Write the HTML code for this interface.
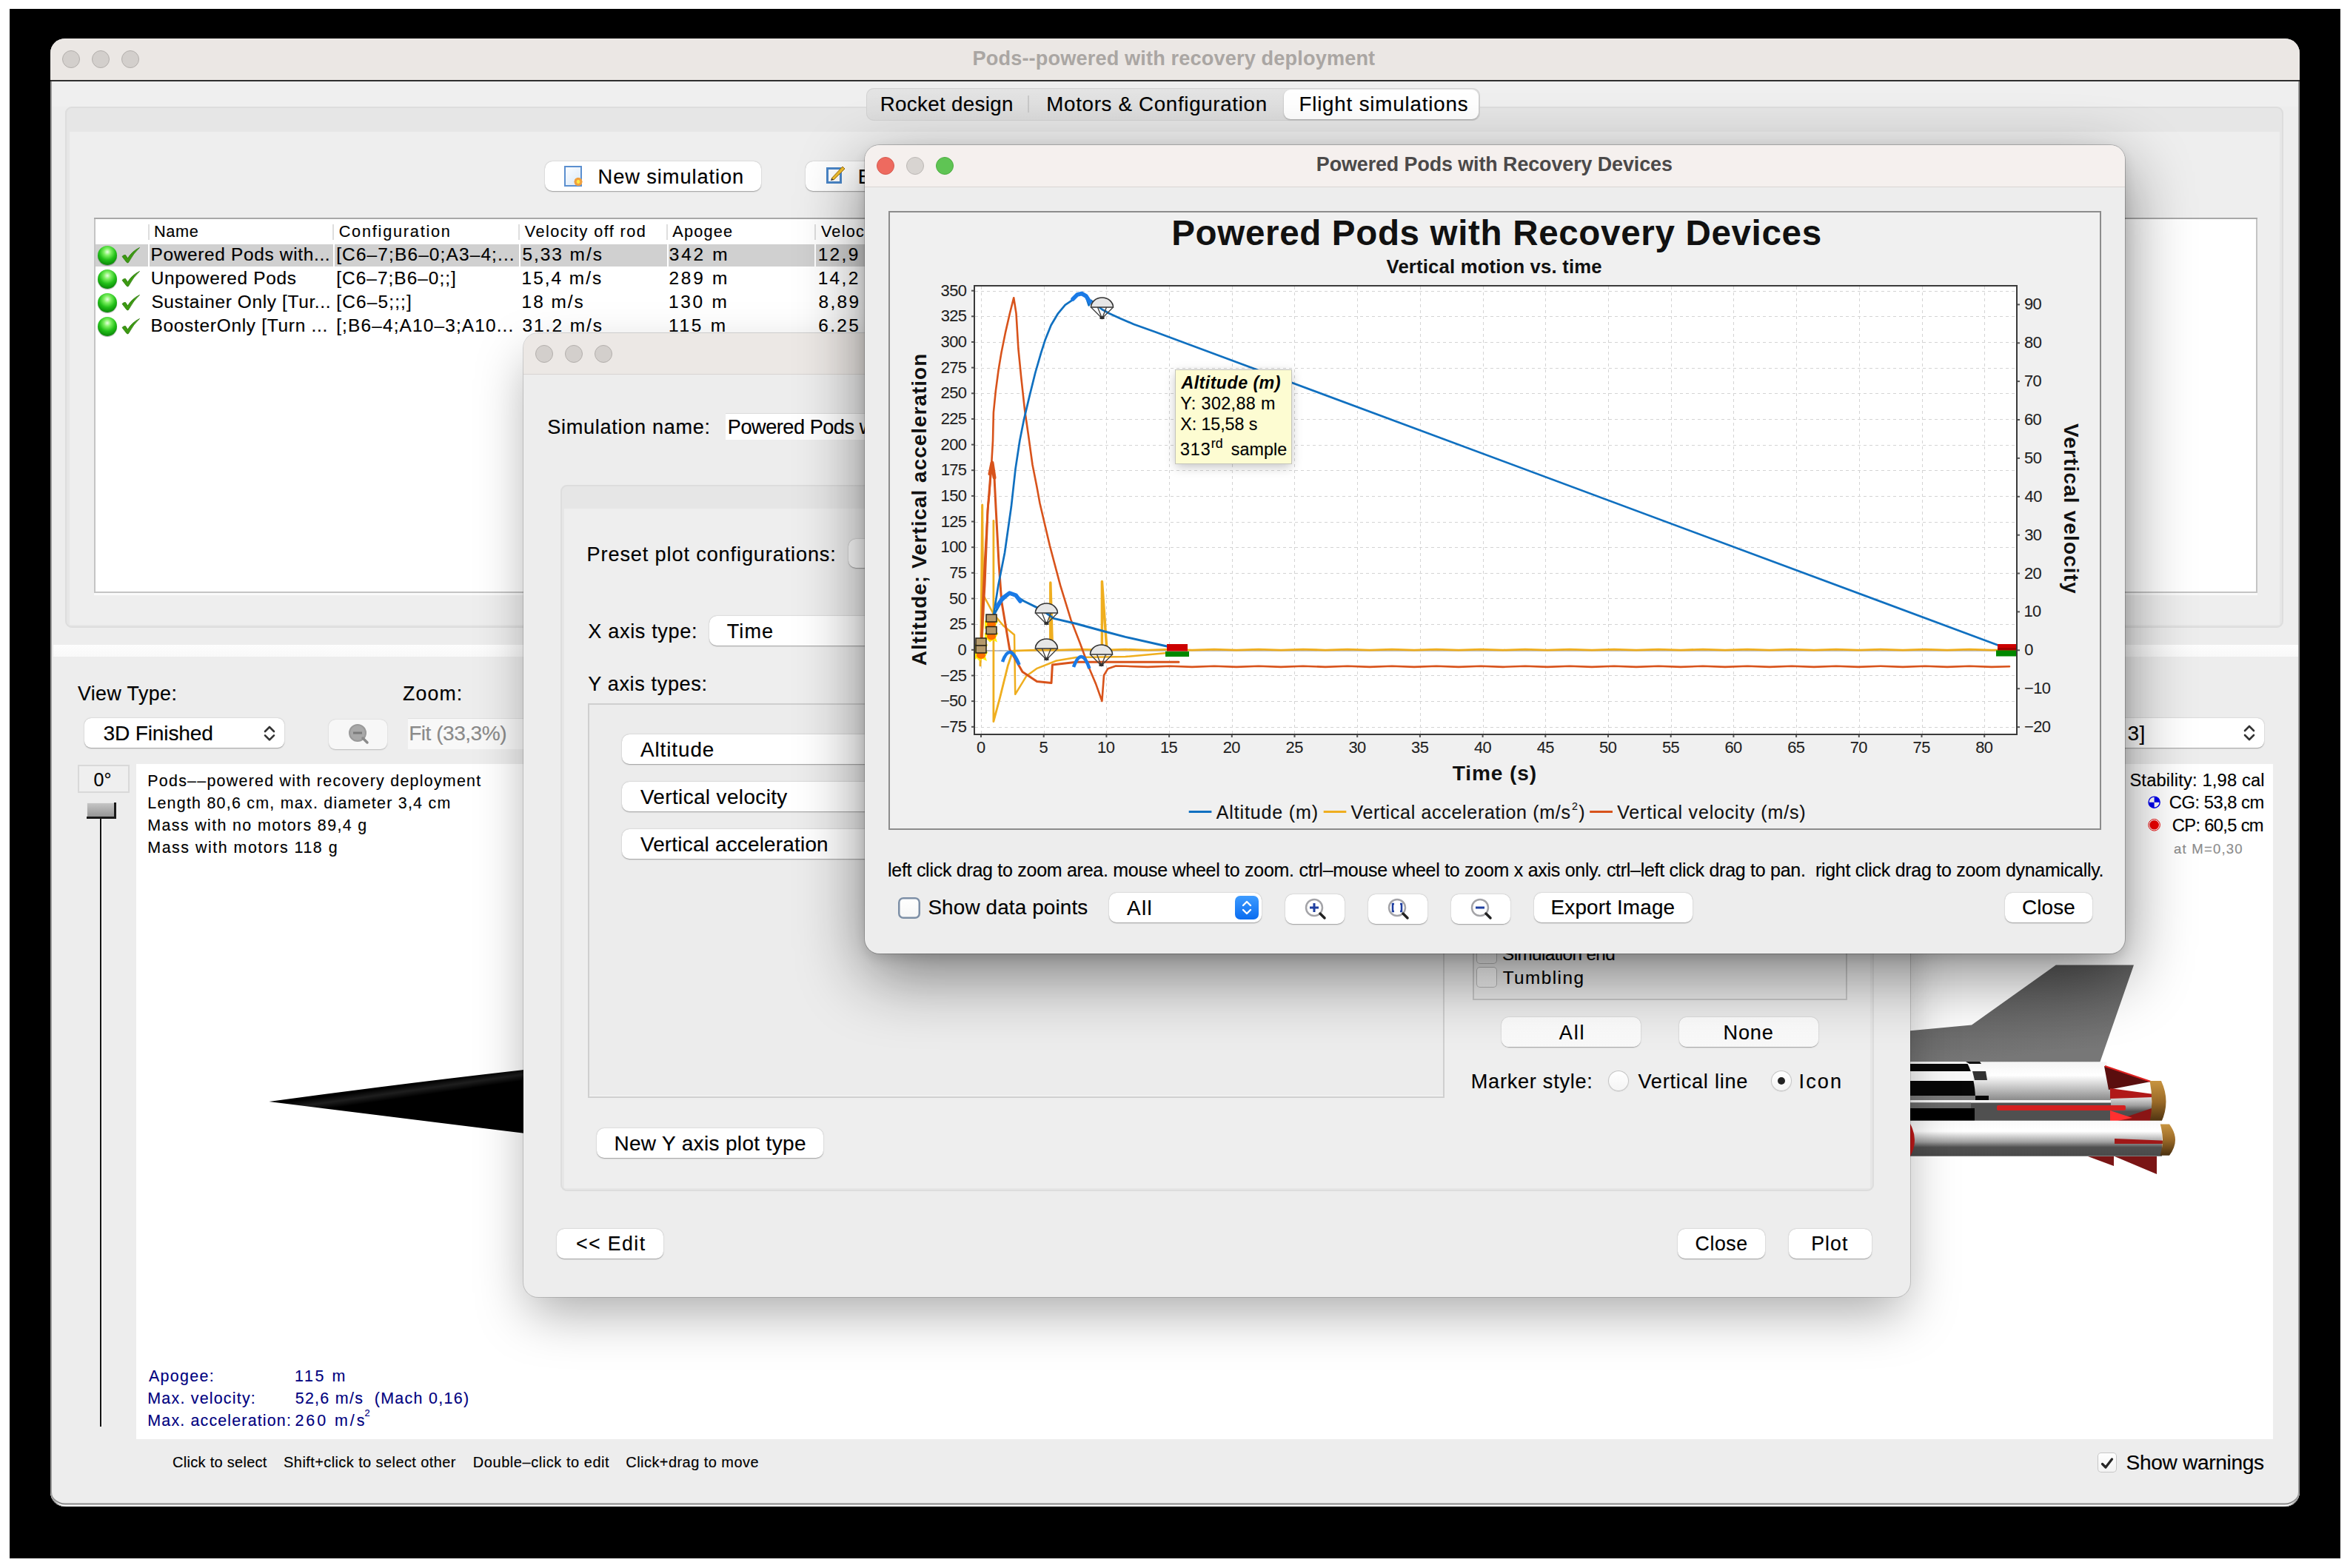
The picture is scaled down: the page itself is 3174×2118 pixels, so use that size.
<!DOCTYPE html>
<html><head><meta charset="utf-8"><style>
html,body{margin:0;padding:0;}
body{width:3174px;height:2118px;position:relative;overflow:hidden;background:#fff;font-family:"Liberation Sans",sans-serif;}
.a{position:absolute;}
.t{position:absolute;white-space:pre;-webkit-text-stroke:0.15px currentColor;}
svg.a{overflow:visible;}
</style></head><body>
<div class="a" style="left:13.0px;top:12.0px;width:3148.0px;height:2093.0px;background:#000;"></div>
<div class="a" style="left:68.0px;top:52.0px;width:3038.0px;height:1982.5px;background:#ededed;border-radius:20px;box-shadow:inset 2px 0 0 #999, inset -2px 0 0 #999, inset 0 -2.5px 0 #fafafa, inset 0 -4.5px 0 #8a8a8a;"></div>
<div class="a" style="left:68.0px;top:52.0px;width:3038.0px;height:56.0px;background:#ebe7e4;border-radius:20px 20px 0 0;"></div>
<div class="a" style="left:68.0px;top:108.0px;width:3038.0px;height:2.0px;background:#2e2e2e;"></div>
<div class="a" style="left:70.0px;top:110.0px;width:3034.0px;height:34.0px;background:#efefef;"></div>
<div class="a" style="left:84px;top:68px;width:22px;height:22px;border-radius:50%;background:#d3cfcc;border:1px solid #b3afac;"></div>
<div class="a" style="left:124px;top:68px;width:22px;height:22px;border-radius:50%;background:#d3cfcc;border:1px solid #b3afac;"></div>
<div class="a" style="left:164px;top:68px;width:22px;height:22px;border-radius:50%;background:#d3cfcc;border:1px solid #b3afac;"></div>
<div class="t" style="left:1313.5px;top:65.3px;font-size:27.14px;line-height:27.14px;color:#aaa6a3;letter-spacing:0.15px;font-weight:bold;-webkit-text-stroke:0;">Pods--powered with recovery deployment</div>
<div class="a" style="left:88.0px;top:144.0px;width:2996.0px;height:704.0px;background:#e6e6e6;border-radius:9px;box-shadow:inset 0 0 0 2px #dddddd;"></div>
<div class="a" style="left:93.7px;top:178.0px;width:2985.3px;height:666.0px;background:#eeeeee;"></div>
<div class="a" style="left:1170.0px;top:119.0px;width:829.0px;height:44.0px;background:linear-gradient(#e4e4e4,#dcdcdc);border-radius:10px;box-shadow:inset 0 0 0 1px #d2d2d2;"></div>
<div class="a" style="left:1734.0px;top:121.0px;width:263.0px;height:40.0px;background:#fff;border-radius:9px;box-shadow:0 1px 2px rgba(0,0,0,0.25);"></div>
<div class="a" style="left:1388.0px;top:129.0px;width:2.0px;height:23.0px;background:#c9c9c9;"></div>
<div class="t" style="left:1188.7px;top:126.5px;font-size:27.71px;line-height:27.71px;color:#000;letter-spacing:0.34px;">Rocket design</div>
<div class="t" style="left:1413.3px;top:126.5px;font-size:27.71px;line-height:27.71px;color:#000;letter-spacing:0.69px;">Motors &amp; Configuration</div>
<div class="t" style="left:1754.4px;top:126.5px;font-size:27.71px;line-height:27.71px;color:#000;letter-spacing:0.83px;">Flight simulations</div>
<div class="a" style="left:736.0px;top:218.0px;width:292.0px;height:40.0px;background:#fff;border-radius:10px;box-shadow:0 0.5px 1.5px rgba(0,0,0,0.35);"></div>
<div class="a" style="left:762.0px;top:224.0px;width:24.0px;height:27.5px;background:linear-gradient(135deg,#ffffff,#d6e6f8);box-shadow:inset 0 0 0 2px #5b8fcf;"></div>
<div class="a" style="left:775.0px;top:239.0px;width:12.0px;height:13.0px;background:radial-gradient(circle,#ffe640 0 25%,#f0a040 30% 60%,transparent 65%);"></div>
<div class="t" style="left:807.6px;top:224.9px;font-size:27.29px;line-height:27.29px;color:#000;letter-spacing:0.89px;">New simulation</div>
<div class="a" style="left:1088.0px;top:218.0px;width:292.0px;height:40.0px;background:#fff;border-radius:10px;box-shadow:0 0.5px 1.5px rgba(0,0,0,0.35);"></div>
<div class="a" style="left:1116.0px;top:226.0px;width:21.0px;height:22.0px;background:transparent;box-shadow:inset 0 0 0 3px #4a86c8;"></div>
<svg class="a" style="left:1120px;top:222px" width="22" height="22" viewBox="0 0 22 22"><path d="M3 19 L18 3 L21 6 L6 21 Z" fill="#f2c030" stroke="#a07010" stroke-width="1"/><path d="M3 19 L6 21 L2 22Z" fill="#333"/></svg>
<div class="t" style="left:1158.8px;top:224.9px;font-size:27.29px;line-height:27.29px;color:#000;">Edit simulation</div>
<div class="a" style="left:127.0px;top:294.0px;width:2922.0px;height:507.0px;background:#fff;box-shadow:inset 0 2px 0 #a8a8a8, inset 2px 0 0 #c4c4c4, inset -2px 0 0 #c4c4c4, inset 0 -2px 0 #c4c4c4;"></div>
<div class="a" style="left:127.0px;top:801.0px;width:2922.0px;height:3.0px;background:#fafafa;"></div>
<div class="a" style="left:199.9px;top:302.5px;width:2.0px;height:21.2px;background:#dedede;"></div>
<div class="a" style="left:449.2px;top:302.5px;width:2.0px;height:21.2px;background:#dedede;"></div>
<div class="a" style="left:700.0px;top:302.5px;width:2.0px;height:21.2px;background:#dedede;"></div>
<div class="a" style="left:900.0px;top:302.5px;width:2.0px;height:21.2px;background:#dedede;"></div>
<div class="a" style="left:1099.8px;top:302.5px;width:2.0px;height:21.2px;background:#dedede;"></div>
<div class="t" style="left:208.0px;top:301.7px;font-size:21.71px;line-height:21.71px;color:#000;letter-spacing:0.65px;">Name</div>
<div class="t" style="left:457.7px;top:301.7px;font-size:21.71px;line-height:21.71px;color:#000;letter-spacing:1.76px;">Configuration</div>
<div class="t" style="left:708.8px;top:301.7px;font-size:21.71px;line-height:21.71px;color:#000;letter-spacing:1.40px;">Velocity off rod</div>
<div class="t" style="left:908.3px;top:301.7px;font-size:21.71px;line-height:21.71px;color:#000;letter-spacing:1.20px;">Apogee</div>
<div class="t" style="left:1108.9px;top:301.7px;font-size:21.71px;line-height:21.71px;color:#000;letter-spacing:1.20px;">Velocity at deployment</div>
<div class="a" style="left:129.0px;top:330.0px;width:70.8px;height:30.0px;background:#d0d0d0;"></div>
<div class="a" style="left:201.9px;top:330.0px;width:248.1px;height:30.0px;background:#d0d0d0;"></div>
<div class="a" style="left:452.0px;top:330.0px;width:249.0px;height:30.0px;background:#d0d0d0;"></div>
<div class="a" style="left:703.0px;top:330.0px;width:198.0px;height:30.0px;background:#d0d0d0;"></div>
<div class="a" style="left:903.0px;top:330.0px;width:197.0px;height:30.0px;background:#d0d0d0;"></div>
<div class="a" style="left:1102.0px;top:330.0px;width:1298.0px;height:30.0px;background:#d0d0d0;"></div>
<div class="a" style="left:132.3px;top:331.5px;width:26px;height:26px;border-radius:50%;background:radial-gradient(circle at 50% 32%, #e8ffe0 0%, #7cf060 22%, #22c018 50%, #0c8a0a 78%, #064a04 100%);box-shadow:0 1px 1px rgba(0,0,0,0.35);"></div>
<svg class="a" style="left:164px;top:334px" width="26" height="22" viewBox="0 0 26 22"><path d="M1 12.5 Q3 10 5.5 10.5 L8.5 15 Q14 5.5 24.5 0.5 Q16.5 7.5 9.5 20.5 Q8.3 21.5 7 20.3 Z" fill="#3c9a12" stroke="#2c7a0a" stroke-width="0.8"/></svg>
<div class="t" style="left:203.5px;top:332.3px;font-size:24.43px;line-height:24.43px;color:#000;letter-spacing:0.67px;">Powered Pods with...</div>
<div class="t" style="left:454.2px;top:332.3px;font-size:24.43px;line-height:24.43px;color:#000;letter-spacing:1.14px;">[C6–7;B6–0;A3–4;...</div>
<div class="t" style="left:705.4px;top:332.3px;font-size:24.43px;line-height:24.43px;color:#000;letter-spacing:1.98px;">5,33 m/s</div>
<div class="t" style="left:903.8px;top:332.3px;font-size:24.43px;line-height:24.43px;color:#000;letter-spacing:2.76px;">342 m</div>
<div class="t" style="left:1104.7px;top:332.3px;font-size:24.43px;line-height:24.43px;color:#000;letter-spacing:2.34px;">12,9 m/s</div>
<div class="a" style="left:132.3px;top:363.5px;width:26px;height:26px;border-radius:50%;background:radial-gradient(circle at 50% 32%, #e8ffe0 0%, #7cf060 22%, #22c018 50%, #0c8a0a 78%, #064a04 100%);box-shadow:0 1px 1px rgba(0,0,0,0.35);"></div>
<svg class="a" style="left:164px;top:366px" width="26" height="22" viewBox="0 0 26 22"><path d="M1 12.5 Q3 10 5.5 10.5 L8.5 15 Q14 5.5 24.5 0.5 Q16.5 7.5 9.5 20.5 Q8.3 21.5 7 20.3 Z" fill="#3c9a12" stroke="#2c7a0a" stroke-width="0.8"/></svg>
<div class="t" style="left:203.7px;top:364.3px;font-size:24.43px;line-height:24.43px;color:#000;letter-spacing:0.69px;">Unpowered Pods</div>
<div class="t" style="left:454.2px;top:364.3px;font-size:24.43px;line-height:24.43px;color:#000;letter-spacing:1.03px;">[C6–7;B6–0;;]</div>
<div class="t" style="left:704.6px;top:364.3px;font-size:24.43px;line-height:24.43px;color:#000;letter-spacing:1.98px;">15,4 m/s</div>
<div class="t" style="left:903.5px;top:364.3px;font-size:24.43px;line-height:24.43px;color:#000;letter-spacing:2.76px;">289 m</div>
<div class="t" style="left:1104.7px;top:364.3px;font-size:24.43px;line-height:24.43px;color:#000;letter-spacing:2.34px;">14,2 m/s</div>
<div class="a" style="left:132.3px;top:395.5px;width:26px;height:26px;border-radius:50%;background:radial-gradient(circle at 50% 32%, #e8ffe0 0%, #7cf060 22%, #22c018 50%, #0c8a0a 78%, #064a04 100%);box-shadow:0 1px 1px rgba(0,0,0,0.35);"></div>
<svg class="a" style="left:164px;top:398px" width="26" height="22" viewBox="0 0 26 22"><path d="M1 12.5 Q3 10 5.5 10.5 L8.5 15 Q14 5.5 24.5 0.5 Q16.5 7.5 9.5 20.5 Q8.3 21.5 7 20.3 Z" fill="#3c9a12" stroke="#2c7a0a" stroke-width="0.8"/></svg>
<div class="t" style="left:204.4px;top:396.3px;font-size:24.43px;line-height:24.43px;color:#000;letter-spacing:0.65px;">Sustainer Only [Tur...</div>
<div class="t" style="left:454.2px;top:396.3px;font-size:24.43px;line-height:24.43px;color:#000;letter-spacing:1.17px;">[C6–5;;;]</div>
<div class="t" style="left:704.6px;top:396.3px;font-size:24.43px;line-height:24.43px;color:#000;letter-spacing:1.98px;">18 m/s</div>
<div class="t" style="left:902.9px;top:396.3px;font-size:24.43px;line-height:24.43px;color:#000;letter-spacing:2.76px;">130 m</div>
<div class="t" style="left:1105.5px;top:396.3px;font-size:24.43px;line-height:24.43px;color:#000;letter-spacing:2.34px;">8,89 m/s</div>
<div class="a" style="left:132.3px;top:427.5px;width:26px;height:26px;border-radius:50%;background:radial-gradient(circle at 50% 32%, #e8ffe0 0%, #7cf060 22%, #22c018 50%, #0c8a0a 78%, #064a04 100%);box-shadow:0 1px 1px rgba(0,0,0,0.35);"></div>
<svg class="a" style="left:164px;top:430px" width="26" height="22" viewBox="0 0 26 22"><path d="M1 12.5 Q3 10 5.5 10.5 L8.5 15 Q14 5.5 24.5 0.5 Q16.5 7.5 9.5 20.5 Q8.3 21.5 7 20.3 Z" fill="#3c9a12" stroke="#2c7a0a" stroke-width="0.8"/></svg>
<div class="t" style="left:203.5px;top:428.3px;font-size:24.43px;line-height:24.43px;color:#000;letter-spacing:0.72px;">BoosterOnly [Turn ...</div>
<div class="t" style="left:454.2px;top:428.3px;font-size:24.43px;line-height:24.43px;color:#000;letter-spacing:1.14px;">[;B6–4;A10–3;A10...</div>
<div class="t" style="left:705.5px;top:428.3px;font-size:24.43px;line-height:24.43px;color:#000;letter-spacing:1.98px;">31.2 m/s</div>
<div class="t" style="left:902.9px;top:428.3px;font-size:24.43px;line-height:24.43px;color:#000;letter-spacing:2.76px;">115 m</div>
<div class="t" style="left:1105.3px;top:428.3px;font-size:24.43px;line-height:24.43px;color:#000;letter-spacing:2.34px;">6.25 m/s</div>
<div class="a" style="left:72.0px;top:871.0px;width:3032.0px;height:16.0px;background:linear-gradient(#fdfdfd,#f9f9f9);"></div>
<div class="t" style="left:104.9px;top:923.7px;font-size:26.71px;line-height:26.71px;color:#000;letter-spacing:0.48px;">View Type:</div>
<div class="t" style="left:544.1px;top:923.7px;font-size:26.71px;line-height:26.71px;color:#000;letter-spacing:1.12px;">Zoom:</div>
<div class="a" style="left:113.7px;top:970.2px;width:270.0px;height:39.8px;background:#fff;border-radius:9px;box-shadow:0 0.5px 1.5px rgba(0,0,0,0.35);"></div>
<div class="t" style="left:139.4px;top:976.5px;font-size:28.14px;line-height:28.14px;color:#000;letter-spacing:-0.15px;">3D Finished</div>
<svg class="a" style="left:356px;top:979.6px" width="16" height="21.3" viewBox="0 0 16 21.3"><path d="M2 8 L8 2 L14 8" fill="none" stroke="#333" stroke-width="2.6" stroke-linecap="round" stroke-linejoin="round"/><path d="M2 13.3 L8 19.3 L14 13.3" fill="none" stroke="#333" stroke-width="2.6" stroke-linecap="round" stroke-linejoin="round"/></svg>
<div class="a" style="left:444.2px;top:971.8px;width:79.1px;height:40.0px;background:#f7f7f7;border-radius:9px;box-shadow:0 0.5px 1.5px rgba(0,0,0,0.22);"></div>
<svg class="a" style="left:469px;top:975px" width="34" height="34" viewBox="0 0 34 34"><circle cx="14" cy="15" r="11" fill="#a8a8a8" stroke="#9a9a9a" stroke-width="2"/><rect x="8" y="13.5" width="12" height="3" fill="#7a7a7a"/><path d="M21 22 L27 28" stroke="#8a8a8a" stroke-width="3.5" stroke-linecap="round"/></svg>
<div class="a" style="left:550.6px;top:970.0px;width:169.4px;height:42.0px;background:#f8f8f8;box-shadow:inset 0 1px 0 #e0e0e0;"></div>
<div class="t" style="left:552.2px;top:976.5px;font-size:28.14px;line-height:28.14px;color:#8a8a8a;letter-spacing:-0.52px;">Fit (33,3%)</div>
<div class="a" style="left:2700.0px;top:969.7px;width:357.6px;height:40.1px;background:#fff;border-radius:9px;box-shadow:0 0.5px 1.5px rgba(0,0,0,0.35);"></div>
<div class="t" style="left:2873.5px;top:977.2px;font-size:28.14px;line-height:28.14px;color:#000;letter-spacing:0.46px;">3]</div>
<svg class="a" style="left:3030px;top:979px" width="16" height="22" viewBox="0 0 16 22"><path d="M2 8 L8 2 L14 8" fill="none" stroke="#333" stroke-width="2.6" stroke-linecap="round" stroke-linejoin="round"/><path d="M2 14 L8 20 L14 14" fill="none" stroke="#333" stroke-width="2.6" stroke-linecap="round" stroke-linejoin="round"/></svg>
<div class="a" style="left:104.9px;top:1032.5px;width:70.6px;height:38.5px;background:#efefef;box-shadow:inset 0 0 0 2px #d9d9d9;"></div>
<div class="t" style="left:126.6px;top:1040.7px;font-size:25.00px;line-height:25.00px;color:#000;">0°</div>
<div class="a" style="left:134.5px;top:1105.0px;width:2.0px;height:822.0px;background:#111;"></div>
<div class="a" style="left:136.5px;top:1105.0px;width:1.5px;height:822.0px;background:#fff;"></div>
<div class="a" style="left:117.0px;top:1084.0px;width:40.0px;height:22.0px;background:linear-gradient(#c8c8c8,#8e8e8e);box-shadow:inset -3px -3px 0 #1a1a1a, inset 1px 1px 0 #e8e8e8;"></div>
<div class="a" style="left:184.0px;top:1032.0px;width:2886.0px;height:912.0px;background:#fff;"></div>
<svg class="a" style="left:0px;top:0px" width="3174" height="2118" viewBox="0 0 3174 2118"><defs><linearGradient id="nc" gradientUnits="userSpaceOnUse" x1="600" y1="1458" x2="606" y2="1500"><stop offset="0" stop-color="#000"/><stop offset="0.2" stop-color="#1e1e1e"/><stop offset="0.4" stop-color="#000"/><stop offset="1" stop-color="#000"/></linearGradient></defs><path d="M363.4 1487.9 Q 540 1464 708 1445 L 708 1530.8 Q 540 1510 363.4 1487.9 Z" fill="url(#nc)"/></svg>
<svg class="a" style="left:0;top:0" width="3174" height="2118" viewBox="0 0 3174 2118"><defs><linearGradient id="fin" x1="0" y1="0" x2="0.3" y2="1"><stop offset="0" stop-color="#545454"/><stop offset="1" stop-color="#777"/></linearGradient><linearGradient id="tubeW" x1="0" y1="0" x2="0" y2="1"><stop offset="0" stop-color="#f4f4f4"/><stop offset="0.35" stop-color="#ffffff"/><stop offset="0.75" stop-color="#b8b8b8"/><stop offset="1" stop-color="#8a8a8a"/></linearGradient><linearGradient id="tubeB" x1="0" y1="0" x2="0" y2="1"><stop offset="0" stop-color="#000"/><stop offset="0.2" stop-color="#111"/><stop offset="0.35" stop-color="#e8e8e8"/><stop offset="0.5" stop-color="#555"/><stop offset="0.7" stop-color="#000"/><stop offset="1" stop-color="#000"/></linearGradient><linearGradient id="pod" x1="0" y1="0" x2="0" y2="1"><stop offset="0" stop-color="#f8f8f8"/><stop offset="0.3" stop-color="#ffffff"/><stop offset="0.6" stop-color="#a0a0a0"/><stop offset="0.75" stop-color="#505050"/><stop offset="1" stop-color="#4a4a4a"/></linearGradient><linearGradient id="ring" x1="0" y1="0" x2="0" y2="1"><stop offset="0" stop-color="#c89440"/><stop offset="0.5" stop-color="#9a6a28"/><stop offset="1" stop-color="#4a3010"/></linearGradient></defs><path d="M2580 1392.3 L2663 1384.5 L2776.8 1303.4 L2882 1303.4 L2836.4 1434.4 L2580 1434.4 Z" fill="url(#fin)"/><path d="M2580 1434.4 L2845 1434.4 Q2853 1460 2851.6 1486 L2580 1486 Z" fill="url(#tubeW)"/><clipPath id="blk"><path d="M2580 1434 L2656 1434 Q2668 1456 2668 1486 L2580 1486 Z"/></clipPath><g clip-path="url(#blk)"><rect x="2580" y="1434" width="90" height="3" fill="#f2f2f2"/><rect x="2580" y="1437" width="90" height="10" fill="#080808"/><rect x="2580" y="1447" width="90" height="13" fill="#f8f8f8"/><rect x="2580" y="1460" width="90" height="20" fill="#070707"/><rect x="2580" y="1480" width="90" height="6" fill="#7a7a7a"/></g><path d="M2655 1434 L2674 1434 L2676 1437 L2660 1437 Z" fill="#111"/><path d="M2664 1447 L2682 1447 L2684 1459 L2667 1459 Z" fill="#333"/><path d="M2668 1480 L2686 1480 L2686 1486 L2668 1486 Z" fill="#050505"/><rect x="2580" y="1486" width="272" height="3.5" fill="#f4f4f4"/><path d="M2580 1489.5 L2852 1489.5 L2852 1514 L2580 1514 Z" fill="#505050"/><rect x="2580" y="1489.5" width="82" height="7.5" fill="#6a6a6a"/><path d="M2580 1497 L2667 1497 L2667 1514 L2580 1514 Z" fill="#000"/><rect x="2851" y="1460" width="55" height="55" fill="url(#pod)"/><path d="M2842 1440 L2905 1461 L2848 1472 Z" fill="#5a0e0e"/><path d="M2843 1440 L2905 1461" stroke="#e02020" stroke-width="2"/><path d="M2850 1470 L2909 1478 L2909 1482 L2850 1484 Z" fill="#b01818"/><rect x="2697" y="1493" width="174" height="7" rx="2" fill="#d42020"/><path d="M2850 1516 L2915 1494 L2915 1518 Z" fill="#8a1515"/><path d="M2850 1500 L2880 1510 L2850 1516 Z" fill="#ff3030"/><path d="M2903.6 1460 L2919 1460 Q2932 1488 2919 1516 L2903.6 1516 Q2909 1488 2903.6 1460 Z" fill="url(#ring)"/><rect x="2580" y="1513.7" width="340" height="48" fill="url(#pod)"/><path d="M2580 1518 Q2592 1540 2580 1562 Z" fill="#c01818"/><path d="M2856 1538 L2930 1541 L2930 1545 L2856 1545 Z" fill="#a01818"/><path d="M2820 1562 L2855 1575 L2855 1562 Z" fill="#7a1515"/><path d="M2856 1562 L2913 1586 L2913 1562 Z" fill="#7a1515"/><path d="M2917.7 1518.5 L2930 1518.5 Q2946 1540 2930 1560.8 L2917.7 1560.8 Q2924 1540 2917.7 1518.5 Z" fill="url(#ring)"/></svg>
<div class="t" style="left:199.3px;top:1044.9px;font-size:21.43px;line-height:21.43px;color:#000;letter-spacing:1.25px;">Pods––powered with recovery deployment</div>
<div class="t" style="left:199.3px;top:1074.9px;font-size:21.43px;line-height:21.43px;color:#000;letter-spacing:1.24px;">Length 80,6 cm, max. diameter 3,4 cm</div>
<div class="t" style="left:199.3px;top:1104.9px;font-size:21.43px;line-height:21.43px;color:#000;letter-spacing:1.36px;">Mass with no motors 89,4 g</div>
<div class="t" style="left:199.3px;top:1134.9px;font-size:21.43px;line-height:21.43px;color:#000;letter-spacing:1.51px;">Mass with motors 118 g</div>
<div class="t" style="left:201.0px;top:1848.5px;font-size:21.43px;line-height:21.43px;color:#000080;letter-spacing:1.33px;">Apogee:</div>
<div class="t" style="left:398.0px;top:1848.5px;font-size:21.43px;line-height:21.43px;color:#000080;letter-spacing:2.61px;">115 m</div>
<div class="t" style="left:199.3px;top:1878.5px;font-size:21.43px;line-height:21.43px;color:#000080;letter-spacing:1.21px;">Max. velocity:</div>
<div class="t" style="left:398.7px;top:1878.5px;font-size:21.43px;line-height:21.43px;color:#000080;letter-spacing:1.30px;">52,6 m/s  (Mach 0,16)</div>
<div class="t" style="left:199.3px;top:1908.9px;font-size:21.43px;line-height:21.43px;color:#000080;letter-spacing:1.16px;">Max. acceleration:</div>
<div class="t" style="left:398.5px;top:1908.9px;font-size:21.43px;line-height:21.43px;color:#000080;letter-spacing:2.94px;">260 m/s</div>
<div class="t" style="left:492.4px;top:1903.1px;font-size:12.86px;line-height:12.86px;color:#000080;">2</div>
<div class="t" style="left:233.0px;top:1965.3px;font-size:20.00px;line-height:20.00px;color:#000;letter-spacing:0.29px;">Click to select</div>
<div class="t" style="left:383.1px;top:1965.3px;font-size:20.00px;line-height:20.00px;color:#000;letter-spacing:0.41px;">Shift+click to select other</div>
<div class="t" style="left:638.8px;top:1965.3px;font-size:20.00px;line-height:20.00px;color:#000;letter-spacing:0.55px;">Double–click to edit</div>
<div class="t" style="left:845.3px;top:1965.3px;font-size:20.00px;line-height:20.00px;color:#000;letter-spacing:0.44px;">Click+drag to move</div>
<div class="a" style="left:2832.5px;top:1962.4px;width:26.8px;height:26.7px;background:linear-gradient(#ffffff,#f2f2f2);border-radius:5px;box-shadow:inset 0 0 0 1px #c6c6c6;"></div>
<svg class="a" style="left:2836px;top:1966px" width="20" height="20" viewBox="0 0 20 20"><path d="M3.5 11.5 L8 16 L16.5 5" fill="none" stroke="#262626" stroke-width="3.2" stroke-linecap="round" stroke-linejoin="round"/></svg>
<div class="t" style="left:2871.5px;top:1962.1px;font-size:28.14px;line-height:28.14px;color:#000;letter-spacing:-0.35px;">Show warnings</div>
<div class="t" style="left:2876.4px;top:1042.9px;font-size:23.71px;line-height:23.71px;color:#000;letter-spacing:0.17px;">Stability: 1,98 cal</div>
<div class="t" style="left:2929.8px;top:1072.9px;font-size:23.71px;line-height:23.71px;color:#000;letter-spacing:-0.46px;">CG: 53,8 cm</div>
<div class="t" style="left:2933.8px;top:1103.7px;font-size:23.71px;line-height:23.71px;color:#000;letter-spacing:-0.66px;">CP: 60,5 cm</div>
<div class="t" style="left:2936.0px;top:1138.0px;font-size:18.57px;line-height:18.57px;color:#8c8c8c;letter-spacing:1.20px;">at M=0,30</div>
<svg class="a" style="left:2900px;top:1074px" width="20" height="50" viewBox="0 0 20 50"><circle cx="9.6" cy="9.7" r="7.6" fill="#fff" stroke="#0000ee" stroke-width="1.4"/><path d="M9.6 9.7 L9.6 2.1 A7.6 7.6 0 0 1 17.2 9.7 Z" fill="#0000ee"/><path d="M9.6 9.7 L9.6 17.3 A7.6 7.6 0 0 1 2 9.7 Z" fill="#0000ee"/><circle cx="9.6" cy="40.3" r="7.8" fill="#fff" stroke="#ee0000" stroke-width="1"/><circle cx="9.6" cy="40.3" r="6.3" fill="#ee0000"/></svg>
<div class="a" style="left:707.0px;top:450.0px;width:1873.0px;height:1302.0px;background:#ededed;border-radius:20px;box-shadow:0 28px 70px -8px rgba(0,0,0,0.34), 0 0 0 1px rgba(0,0,0,0.15);"></div>
<div class="a" style="left:707.0px;top:450.0px;width:1873.0px;height:56.0px;background:#ece8e5;border-radius:20px 20px 0 0;box-shadow:inset 0 -1px 0 #d8d4d1;"></div>
<div class="a" style="left:723px;top:466px;width:22px;height:22px;border-radius:50%;background:#d3cfcc;border:1px solid #b3afac;"></div>
<div class="a" style="left:763px;top:466px;width:22px;height:22px;border-radius:50%;background:#d3cfcc;border:1px solid #b3afac;"></div>
<div class="a" style="left:803px;top:466px;width:22px;height:22px;border-radius:50%;background:#d3cfcc;border:1px solid #b3afac;"></div>
<div class="t" style="left:739.3px;top:563.0px;font-size:27.14px;line-height:27.14px;color:#000;letter-spacing:0.68px;">Simulation name:</div>
<div class="a" style="left:979.7px;top:557.8px;width:420.3px;height:36.6px;background:#fff;box-shadow:inset 0 1px 0 #dcdcdc;"></div>
<div class="t" style="left:982.8px;top:563.0px;font-size:27.14px;line-height:27.14px;color:#000;letter-spacing:-0.47px;">Powered Pods with Recovery Devices</div>
<div class="a" style="left:756.5px;top:654.6px;width:1774.5px;height:954.4px;background:#e6e6e6;border-radius:9px;box-shadow:inset 0 0 0 2px #dddddd;"></div>
<div class="a" style="left:762.0px;top:687.3px;width:1763.5px;height:917.7px;background:#eeeeee;"></div>
<div class="t" style="left:792.6px;top:734.8px;font-size:27.14px;line-height:27.14px;color:#000;letter-spacing:0.87px;">Preset plot configurations:</div>
<div class="a" style="left:1145.7px;top:727.8px;width:454.3px;height:39.2px;background:#fff;border-radius:10px;box-shadow:0 0.5px 1.5px rgba(0,0,0,0.35);"></div>
<div class="t" style="left:794.3px;top:838.6px;font-size:27.14px;line-height:27.14px;color:#000;letter-spacing:0.64px;">X axis type:</div>
<div class="a" style="left:957.5px;top:831.8px;width:542.5px;height:40.2px;background:#fff;border-radius:10px;box-shadow:0 0.5px 1.5px rgba(0,0,0,0.35);"></div>
<div class="t" style="left:981.8px;top:838.6px;font-size:27.14px;line-height:27.14px;color:#000;letter-spacing:1.01px;">Time</div>
<div class="t" style="left:794.3px;top:910.0px;font-size:27.14px;line-height:27.14px;color:#000;letter-spacing:0.62px;">Y axis types:</div>
<div class="a" style="left:794.0px;top:950.0px;width:1157.0px;height:533.0px;background:#ececec;box-shadow:inset 0 0 0 2px #cfcfcf, inset -1px -3px 0 #f8f8f8;"></div>
<div class="a" style="left:839.9px;top:991.6px;width:660.1px;height:40.6px;background:#fff;border-radius:10px;box-shadow:0 0.5px 1.5px rgba(0,0,0,0.35);"></div>
<div class="t" style="left:864.9px;top:998.7px;font-size:27.86px;line-height:27.86px;color:#000;letter-spacing:0.93px;">Altitude</div>
<div class="a" style="left:839.9px;top:1056.0px;width:660.1px;height:40.2px;background:#fff;border-radius:10px;box-shadow:0 0.5px 1.5px rgba(0,0,0,0.35);"></div>
<div class="t" style="left:864.9px;top:1062.7px;font-size:27.86px;line-height:27.86px;color:#000;letter-spacing:0.40px;">Vertical velocity</div>
<div class="a" style="left:839.9px;top:1120.3px;width:660.1px;height:39.9px;background:#fff;border-radius:10px;box-shadow:0 0.5px 1.5px rgba(0,0,0,0.35);"></div>
<div class="t" style="left:864.9px;top:1126.7px;font-size:27.86px;line-height:27.86px;color:#000;letter-spacing:0.22px;">Vertical acceleration</div>
<div class="a" style="left:806.0px;top:1523.8px;width:305.9px;height:40.5px;background:#fff;border-radius:10px;box-shadow:0 0.5px 1.5px rgba(0,0,0,0.35);"></div>
<div class="t" style="left:829.4px;top:1530.8px;font-size:28.00px;line-height:28.00px;color:#000;letter-spacing:0.34px;">New Y axis plot type</div>
<div class="a" style="left:1988.5px;top:1150.0px;width:506.5px;height:201.3px;background:#ececec;box-shadow:inset 0 0 0 2px #c9c9c9;"></div>
<div class="a" style="left:1994.2px;top:1274.5px;width:27.7px;height:27.0px;background:linear-gradient(#fdfdfd,#f0f0f0);border-radius:5px;box-shadow:inset 0 0 0 1px #b8b8b8;"></div>
<div class="t" style="left:2029.1px;top:1277.1px;font-size:24.29px;line-height:24.29px;color:#000;letter-spacing:-0.62px;">Simulation end</div>
<div class="a" style="left:1994.2px;top:1306.3px;width:27.7px;height:27.3px;background:linear-gradient(#fdfdfd,#f0f0f0);border-radius:5px;box-shadow:inset 0 0 0 1px #b8b8b8;"></div>
<div class="t" style="left:2029.7px;top:1309.1px;font-size:24.29px;line-height:24.29px;color:#000;letter-spacing:1.47px;">Tumbling</div>
<div class="a" style="left:2028.0px;top:1374.0px;width:187.6px;height:39.8px;background:linear-gradient(#ffffff,#f8f8f8);border-radius:10px;box-shadow:0 0.5px 1.5px rgba(0,0,0,0.35);"></div>
<div class="t" style="left:2105.8px;top:1381.0px;font-size:27.14px;line-height:27.14px;color:#000;letter-spacing:1.75px;">All</div>
<div class="a" style="left:2268.0px;top:1374.0px;width:187.6px;height:39.8px;background:linear-gradient(#ffffff,#f8f8f8);border-radius:10px;box-shadow:0 0.5px 1.5px rgba(0,0,0,0.35);"></div>
<div class="t" style="left:2327.6px;top:1381.0px;font-size:27.14px;line-height:27.14px;color:#000;letter-spacing:0.80px;">None</div>
<div class="t" style="left:1986.8px;top:1447.0px;font-size:27.14px;line-height:27.14px;color:#000;letter-spacing:0.73px;">Marker style:</div>
<div class="a" style="left:2172.0px;top:1446.0px;width:28.0px;height:28.0px;background:linear-gradient(#ffffff,#f4f4f4);border-radius:50%;box-shadow:inset 0 0 0 1px #c4c4c4, 0 0.5px 1px rgba(0,0,0,0.15);"></div>
<div class="t" style="left:2212.5px;top:1447.0px;font-size:27.14px;line-height:27.14px;color:#000;letter-spacing:0.77px;">Vertical line</div>
<div class="a" style="left:2391.6px;top:1446.0px;width:28.0px;height:28.0px;background:linear-gradient(#ffffff,#f4f4f4);border-radius:50%;box-shadow:inset 0 0 0 1px #c4c4c4, 0 0.5px 1px rgba(0,0,0,0.15);"></div>
<div class="a" style="left:2400.6px;top:1455.0px;width:10.0px;height:10.0px;background:#222;border-radius:50%;"></div>
<div class="t" style="left:2429.6px;top:1447.0px;font-size:27.14px;line-height:27.14px;color:#000;letter-spacing:2.09px;">Icon</div>
<div class="a" style="left:751.9px;top:1659.7px;width:143.8px;height:40.3px;background:#fff;border-radius:10px;box-shadow:0 0.5px 1.5px rgba(0,0,0,0.35);"></div>
<div class="t" style="left:777.9px;top:1667.2px;font-size:26.71px;line-height:26.71px;color:#000;letter-spacing:1.44px;">&lt;&lt; Edit</div>
<div class="a" style="left:2266.0px;top:1660.0px;width:117.8px;height:40.0px;background:#fff;border-radius:10px;box-shadow:0 0.5px 1.5px rgba(0,0,0,0.35);"></div>
<div class="t" style="left:2289.6px;top:1667.4px;font-size:26.71px;line-height:26.71px;color:#000;letter-spacing:0.54px;">Close</div>
<div class="a" style="left:2416.0px;top:1660.0px;width:111.5px;height:40.0px;background:#fff;border-radius:10px;box-shadow:0 0.5px 1.5px rgba(0,0,0,0.35);"></div>
<div class="t" style="left:2446.2px;top:1667.4px;font-size:26.71px;line-height:26.71px;color:#000;letter-spacing:1.06px;">Plot</div>
<div class="a" style="left:1168.0px;top:196.0px;width:1702.0px;height:1091.5px;background:#ededed;border-radius:20px;box-shadow:0 30px 90px rgba(0,0,0,0.48), 0 6px 16px rgba(0,0,0,0.12), 0 0 0 1px rgba(0,0,0,0.2);"></div>
<div class="a" style="left:1168.0px;top:196.0px;width:1702.0px;height:57.0px;background:#f5f0ee;border-radius:20px 20px 0 0;box-shadow:inset 0 -1px 0 #dad5d2;"></div>
<div class="a" style="left:1184px;top:212px;width:22px;height:22px;border-radius:50%;background:#ee6a5f;border:1px solid #d65a50;"></div>
<div class="a" style="left:1224px;top:212px;width:22px;height:22px;border-radius:50%;background:#d8d4d1;border:1px solid #bcb8b5;"></div>
<div class="a" style="left:1264px;top:212px;width:22px;height:22px;border-radius:50%;background:#5fc454;border:1px solid #4cad41;"></div>
<div class="t" style="left:1777.8px;top:209.4px;font-size:26.86px;line-height:26.86px;color:#4b4949;letter-spacing:-0.08px;font-weight:bold;-webkit-text-stroke:0;">Powered Pods with Recovery Devices</div>
<div class="a" style="left:1200.0px;top:284.5px;width:1638.0px;height:836.5px;background:#f0f0f0;box-shadow:inset 0 0 0 2px #8c8c8c;"></div>
<div class="t" style="left:1582.2px;top:291.4px;font-size:47.57px;line-height:47.57px;color:#111;letter-spacing:0.65px;font-weight:bold;-webkit-text-stroke:0;">Powered Pods with Recovery Devices</div>
<div class="t" style="left:1872.5px;top:348.2px;font-size:25.71px;line-height:25.71px;color:#111;letter-spacing:0.17px;font-weight:bold;-webkit-text-stroke:0;">Vertical motion vs. time</div>
<svg class="a" style="left:0;top:0" width="3174" height="2118" viewBox="0 0 3174 2118"><defs><clipPath id="pc"><rect x="1317" y="387" width="1406" height="604"/></clipPath></defs><rect x="1317" y="387" width="1406" height="604" fill="#fff"/><g stroke="#d4d4d4" stroke-width="1" stroke-dasharray="4 4"><line x1="1317" y1="393.5" x2="2723" y2="393.5"/><line x1="1317" y1="427.5" x2="2723" y2="427.5"/><line x1="1317" y1="462.5" x2="2723" y2="462.5"/><line x1="1317" y1="497.5" x2="2723" y2="497.5"/><line x1="1317" y1="531.5" x2="2723" y2="531.5"/><line x1="1317" y1="566.5" x2="2723" y2="566.5"/><line x1="1317" y1="601.5" x2="2723" y2="601.5"/><line x1="1317" y1="635.5" x2="2723" y2="635.5"/><line x1="1317" y1="670.5" x2="2723" y2="670.5"/><line x1="1317" y1="705.5" x2="2723" y2="705.5"/><line x1="1317" y1="739.5" x2="2723" y2="739.5"/><line x1="1317" y1="774.5" x2="2723" y2="774.5"/><line x1="1317" y1="808.5" x2="2723" y2="808.5"/><line x1="1317" y1="843.5" x2="2723" y2="843.5"/><line x1="1317" y1="878.5" x2="2723" y2="878.5"/><line x1="1317" y1="912.5" x2="2723" y2="912.5"/><line x1="1317" y1="947.5" x2="2723" y2="947.5"/><line x1="1317" y1="982.5" x2="2723" y2="982.5"/><line x1="1325.5" y1="387" x2="1325.5" y2="991"/><line x1="1410.5" y1="387" x2="1410.5" y2="991"/><line x1="1494.5" y1="387" x2="1494.5" y2="991"/><line x1="1579.5" y1="387" x2="1579.5" y2="991"/><line x1="1664.5" y1="387" x2="1664.5" y2="991"/><line x1="1748.5" y1="387" x2="1748.5" y2="991"/><line x1="1833.5" y1="387" x2="1833.5" y2="991"/><line x1="1918.5" y1="387" x2="1918.5" y2="991"/><line x1="2003.5" y1="387" x2="2003.5" y2="991"/><line x1="2087.5" y1="387" x2="2087.5" y2="991"/><line x1="2172.5" y1="387" x2="2172.5" y2="991"/><line x1="2257.5" y1="387" x2="2257.5" y2="991"/><line x1="2341.5" y1="387" x2="2341.5" y2="991"/><line x1="2426.5" y1="387" x2="2426.5" y2="991"/><line x1="2511.5" y1="387" x2="2511.5" y2="991"/><line x1="2596.5" y1="387" x2="2596.5" y2="991"/><line x1="2680.5" y1="387" x2="2680.5" y2="991"/></g><line x1="1317" y1="879" x2="2723" y2="879" stroke="#aaa" stroke-width="1.5"/><g stroke="#555" stroke-width="2"><line x1="1312" y1="392.7" x2="1317" y2="392.7"/><line x1="1312" y1="427.3" x2="1317" y2="427.3"/><line x1="1312" y1="462.0" x2="1317" y2="462.0"/><line x1="1312" y1="496.6" x2="1317" y2="496.6"/><line x1="1312" y1="531.3" x2="1317" y2="531.3"/><line x1="1312" y1="565.9" x2="1317" y2="565.9"/><line x1="1312" y1="600.6" x2="1317" y2="600.6"/><line x1="1312" y1="635.2" x2="1317" y2="635.2"/><line x1="1312" y1="669.9" x2="1317" y2="669.9"/><line x1="1312" y1="704.5" x2="1317" y2="704.5"/><line x1="1312" y1="739.2" x2="1317" y2="739.2"/><line x1="1312" y1="773.8" x2="1317" y2="773.8"/><line x1="1312" y1="808.5" x2="1317" y2="808.5"/><line x1="1312" y1="843.1" x2="1317" y2="843.1"/><line x1="1312" y1="877.8" x2="1317" y2="877.8"/><line x1="1312" y1="912.5" x2="1317" y2="912.5"/><line x1="1312" y1="947.1" x2="1317" y2="947.1"/><line x1="1312" y1="981.8" x2="1317" y2="981.8"/><line x1="1325.0" y1="991" x2="1325.0" y2="996"/><line x1="1409.7" y1="991" x2="1409.7" y2="996"/><line x1="1494.4" y1="991" x2="1494.4" y2="996"/><line x1="1579.1" y1="991" x2="1579.1" y2="996"/><line x1="1663.8" y1="991" x2="1663.8" y2="996"/><line x1="1748.5" y1="991" x2="1748.5" y2="996"/><line x1="1833.2" y1="991" x2="1833.2" y2="996"/><line x1="1917.9" y1="991" x2="1917.9" y2="996"/><line x1="2002.6" y1="991" x2="2002.6" y2="996"/><line x1="2087.3" y1="991" x2="2087.3" y2="996"/><line x1="2172.0" y1="991" x2="2172.0" y2="996"/><line x1="2256.7" y1="991" x2="2256.7" y2="996"/><line x1="2341.4" y1="991" x2="2341.4" y2="996"/><line x1="2426.1" y1="991" x2="2426.1" y2="996"/><line x1="2510.8" y1="991" x2="2510.8" y2="996"/><line x1="2595.5" y1="991" x2="2595.5" y2="996"/><line x1="2680.2" y1="991" x2="2680.2" y2="996"/><line x1="2723" y1="982.1" x2="2728" y2="982.1"/><line x1="2723" y1="930.2" x2="2728" y2="930.2"/><line x1="2723" y1="878.3" x2="2728" y2="878.3"/><line x1="2723" y1="826.4" x2="2728" y2="826.4"/><line x1="2723" y1="774.5" x2="2728" y2="774.5"/><line x1="2723" y1="722.7" x2="2728" y2="722.7"/><line x1="2723" y1="670.8" x2="2728" y2="670.8"/><line x1="2723" y1="618.9" x2="2728" y2="618.9"/><line x1="2723" y1="567.0" x2="2728" y2="567.0"/><line x1="2723" y1="515.1" x2="2728" y2="515.1"/><line x1="2723" y1="463.3" x2="2728" y2="463.3"/><line x1="2723" y1="411.4" x2="2728" y2="411.4"/></g><g clip-path="url(#pc)"><polyline points="1324.0,899.0 1325.0,860.0 1326.7,682.0 1327.5,781.0 1328.0,830.0 1326.0,870.0 1324.5,880.0" fill="none" stroke="#efae1f" stroke-width="3" stroke-linejoin="round" stroke-linecap="round" /><polyline points="1326.7,801.0 1341.9,829.3 1355.0,845.0 1370.0,857.5 1371.2,937.8 1386.2,913.3 1400.0,903.2 1426.8,892.5 1453.6,888.0 1520.0,887.0 1576.0,882.0" fill="none" stroke="#efae1f" stroke-width="2.5" stroke-linejoin="round" stroke-linecap="round" /><polyline points="1341.9,703.4 1341.9,974.7 1350.6,942.1 1361.4,898.7 1368.0,879.2 1400.0,878.2 1430.0,878.1 1460.0,877.1 1490.0,878.1 1520.0,877.1 1550.0,878.1 1580.0,877.1 1610.0,878.1 1640.0,877.1 1670.0,878.1 1700.0,877.1 1730.0,878.1 1760.0,877.1 1790.0,878.1 1820.0,877.1 1850.0,878.1 1880.0,877.1 1910.0,878.1 1940.0,877.1 1970.0,878.1 2000.0,877.1 2030.0,878.1 2060.0,877.1 2090.0,878.1 2120.0,877.1 2150.0,878.1 2180.0,877.1 2210.0,878.1 2240.0,877.1 2270.0,878.1 2300.0,877.1 2330.0,878.1 2360.0,877.1 2390.0,878.1 2420.0,877.1 2450.0,878.1 2480.0,877.1 2510.0,878.1 2540.0,877.1 2570.0,878.1 2600.0,877.1 2630.0,878.1 2660.0,877.1 2690.0,878.1 2723.0,877.6" fill="none" stroke="#efae1f" stroke-width="2.8" stroke-linejoin="round" stroke-linecap="round" /><polyline points="1418.8,878.0 1418.8,787.1 1421.4,876.4" fill="none" stroke="#efae1f" stroke-width="3.5" stroke-linejoin="round" stroke-linecap="round" /><polyline points="1488.4,878.0 1488.4,785.4 1494.6,872.9" fill="none" stroke="#efae1f" stroke-width="3.5" stroke-linejoin="round" stroke-linecap="round" /><polyline points="1325.0,878.0 1327.0,820.0 1330.0,760.0 1334.3,684.8 1336.2,668.0 1339.0,629.7 1341.0,595.3 1341.9,557.1 1344.8,528.4 1348.6,499.7 1352.4,476.8 1358.2,448.1 1363.9,423.2 1369.2,402.2 1372.5,423.2 1375.4,471.0 1379.2,509.3 1384.0,553.3 1388.7,585.8 1394.5,627.8 1400.2,656.5 1404.5,680.0 1417.9,737.1 1432.1,790.7 1446.4,837.1 1458.9,869.3 1471.4,903.2 1480.4,924.6 1488.4,947.0 1491.0,912.1 1496.4,903.2 1507.1,899.6 1520.0,899.8 1550.0,900.9 1580.0,899.7 1610.0,900.9 1640.0,899.7 1670.0,900.9 1700.0,899.7 1730.0,900.9 1760.0,899.7 1790.0,900.9 1820.0,899.7 1850.0,900.9 1880.0,899.7 1910.0,900.9 1940.0,899.7 1970.0,900.9 2000.0,899.7 2030.0,900.9 2060.0,899.7 2090.0,900.9 2120.0,899.7 2150.0,900.9 2180.0,899.7 2210.0,900.9 2240.0,899.7 2270.0,900.9 2300.0,899.7 2330.0,900.9 2360.0,899.7 2390.0,900.9 2420.0,899.7 2450.0,900.9 2480.0,899.7 2510.0,900.9 2540.0,899.7 2570.0,900.9 2600.0,899.7 2630.0,900.9 2660.0,899.7 2690.0,900.9 2714.0,900.3" fill="none" stroke="#d8531b" stroke-width="2.6" stroke-linejoin="round" stroke-linecap="round" /><polyline points="1325.0,878.0 1330.0,790.0 1334.0,690.0 1338.0,640.0 1340.0,625.0 1343.0,645.0 1345.0,685.0 1349.0,760.0 1352.7,812.0 1363.6,877.0 1381.0,907.4 1400.5,920.4 1420.0,922.6 1421.4,897.9 1453.6,894.3 1592.0,894.3" fill="none" stroke="#d8531b" stroke-width="3" stroke-linejoin="round" stroke-linecap="round" /><polyline points="1337.0,640.0 1340.0,625.0 1343.0,645.0" fill="none" stroke="#d8531b" stroke-width="5" stroke-linejoin="round" stroke-linecap="round" /><polyline points="1325.0,878.0 1332.0,860.0 1341.9,831.4 1348.4,790.2 1357.0,746.8 1365.8,684.8 1371.5,633.6 1377.3,595.3 1383.0,566.6 1390.7,534.1 1398.3,503.5 1406.0,476.8 1411.9,458.4 1419.6,439.3 1429.1,423.3 1438.7,411.8 1448.3,405.4 1454.7,397.8 1461.0,396.5 1466.2,399.0 1470.6,412.4 1473.8,406.0 1488.5,418.0 1498.0,423.3 1512.1,429.7 1531.3,438.0 1560.0,448.2 2708.0,875.0" fill="none" stroke="#1070c0" stroke-width="2.7" stroke-linejoin="round" stroke-linecap="round" /><polyline points="1449.0,404.0 1455.0,398.0 1461.0,396.5 1467.0,400.0 1472.0,408.0" fill="none" stroke="#1a7ae6" stroke-width="5.5" stroke-linejoin="round" stroke-linecap="round" /><polyline points="1341.9,831.4 1352.7,812.0 1363.6,802.0 1372.3,805.4 1383.0,812.0 1400.5,820.6 1413.4,828.2 1423.2,835.4 1453.6,842.5 1489.3,852.3 1520.0,860.4 1576.0,873.0" fill="none" stroke="#1070c0" stroke-width="3" stroke-linejoin="round" stroke-linecap="round" /><polyline points="1346.0,820.0 1354.0,808.0 1363.6,801.0 1372.0,804.0 1378.0,812.0" fill="none" stroke="#1a7ae6" stroke-width="5.5" stroke-linejoin="round" stroke-linecap="round" /><path d="M1354 894 Q1363.6 866 1376.6 898" fill="none" stroke="#1a7ae6" stroke-width="4.5"/><path d="M1450 901 Q1460.7 872 1471.4 903" fill="none" stroke="#1a7ae6" stroke-width="4.5"/><g transform="translate(1339,835)"><path d="M-9 4 L-5 0 L0 3 L5 0 L9 4 L6 10 L8 16 L2 13 L-2 16 L-6 12 L-9 15 Z" fill="#ffee00"/><ellipse cx="0" cy="8" rx="6" ry="5" fill="#ff7000"/><rect x="-7" y="-5" width="14" height="10" fill="#b49a6c" stroke="#2a2418" stroke-width="1.5"/></g><g transform="translate(1339,851.5)"><path d="M-9 4 L-5 0 L0 3 L5 0 L9 4 L6 10 L8 16 L2 13 L-2 16 L-6 12 L-9 15 Z" fill="#ffee00"/><ellipse cx="0" cy="8" rx="6" ry="5" fill="#ff7000"/><rect x="-7" y="-5" width="14" height="10" fill="#b49a6c" stroke="#2a2418" stroke-width="1.5"/></g><g transform="translate(1325,867)"><path d="M-9 4 L-5 0 L0 3 L5 0 L9 4 L6 10 L8 16 L2 13 L-2 16 L-6 12 L-9 15 Z" fill="#ffee00"/><ellipse cx="0" cy="8" rx="6" ry="5" fill="#ff7000"/><rect x="-7" y="-5" width="14" height="10" fill="#b49a6c" stroke="#2a2418" stroke-width="1.5"/></g><g transform="translate(1325,877)"><path d="M-9 4 L-5 0 L0 3 L5 0 L9 4 L6 10 L8 16 L2 13 L-2 16 L-6 12 L-9 15 Z" fill="#ffee00"/><ellipse cx="0" cy="8" rx="6" ry="5" fill="#ff7000"/><rect x="-7" y="-5" width="14" height="10" fill="#b49a6c" stroke="#2a2418" stroke-width="1.5"/></g><g transform="translate(1488.5,415) scale(1.0)"><path d="M-15 0 A15 13 0 0 1 15 0 Z" fill="#e6e6e6" stroke="#333" stroke-width="1.6"/><path d="M-15 0 L0 15 L15 0 M-6 0 L0 15 L6 0" fill="none" stroke="#444" stroke-width="1.4"/><rect x="-3" y="12" width="6" height="4" fill="#333"/></g><g transform="translate(1413.4,828) scale(1.0)"><path d="M-15 0 A15 13 0 0 1 15 0 Z" fill="#e6e6e6" stroke="#333" stroke-width="1.6"/><path d="M-15 0 L0 15 L15 0 M-6 0 L0 15 L6 0" fill="none" stroke="#444" stroke-width="1.4"/><rect x="-3" y="12" width="6" height="4" fill="#333"/></g><g transform="translate(1413.4,876) scale(1.0)"><path d="M-15 0 A15 13 0 0 1 15 0 Z" fill="#e6e6e6" stroke="#333" stroke-width="1.6"/><path d="M-15 0 L0 15 L15 0 M-6 0 L0 15 L6 0" fill="none" stroke="#444" stroke-width="1.4"/><rect x="-3" y="12" width="6" height="4" fill="#333"/></g><g transform="translate(1487.5,884) scale(1.0)"><path d="M-15 0 A15 13 0 0 1 15 0 Z" fill="#e6e6e6" stroke="#333" stroke-width="1.6"/><path d="M-15 0 L0 15 L15 0 M-6 0 L0 15 L6 0" fill="none" stroke="#444" stroke-width="1.4"/><rect x="-3" y="12" width="6" height="4" fill="#333"/></g><rect x="1576" y="870" width="28" height="9.5" fill="#cc0000"/><rect x="1574" y="880" width="32" height="7" fill="#008800"/><rect x="2698" y="870" width="28" height="8.5" fill="#cc0000"/><rect x="2698" y="875" width="28" height="3.5" fill="#a00000"/><rect x="2696" y="878.5" width="30" height="8" fill="#008800"/></g><rect x="1316" y="386" width="1408" height="606" fill="none" stroke="#3a3a3a" stroke-width="2"/><line x1="1605.7" y1="1096.5" x2="1636.4" y2="1096.5" stroke="#1070c0" stroke-width="3"/><line x1="1787.7" y1="1096.5" x2="1818.3" y2="1096.5" stroke="#efae1f" stroke-width="3"/><line x1="2147.2" y1="1096.5" x2="2178" y2="1096.5" stroke="#d8531b" stroke-width="3"/></svg>
<div class="t" style="left:1270.6px;top:381.7px;font-size:21.86px;line-height:21.86px;color:#222;letter-spacing:-0.60px;-webkit-text-stroke:0.1px #222;">350</div>
<div class="t" style="left:1270.7px;top:416.3px;font-size:21.86px;line-height:21.86px;color:#222;letter-spacing:-0.60px;-webkit-text-stroke:0.1px #222;">325</div>
<div class="t" style="left:1270.6px;top:451.0px;font-size:21.86px;line-height:21.86px;color:#222;letter-spacing:-0.60px;-webkit-text-stroke:0.1px #222;">300</div>
<div class="t" style="left:1270.7px;top:485.6px;font-size:21.86px;line-height:21.86px;color:#222;letter-spacing:-0.60px;-webkit-text-stroke:0.1px #222;">275</div>
<div class="t" style="left:1270.6px;top:520.3px;font-size:21.86px;line-height:21.86px;color:#222;letter-spacing:-0.60px;-webkit-text-stroke:0.1px #222;">250</div>
<div class="t" style="left:1270.7px;top:554.9px;font-size:21.86px;line-height:21.86px;color:#222;letter-spacing:-0.60px;-webkit-text-stroke:0.1px #222;">225</div>
<div class="t" style="left:1270.6px;top:589.6px;font-size:21.86px;line-height:21.86px;color:#222;letter-spacing:-0.60px;-webkit-text-stroke:0.1px #222;">200</div>
<div class="t" style="left:1270.7px;top:624.2px;font-size:21.86px;line-height:21.86px;color:#222;letter-spacing:-0.60px;-webkit-text-stroke:0.1px #222;">175</div>
<div class="t" style="left:1270.6px;top:658.9px;font-size:21.86px;line-height:21.86px;color:#222;letter-spacing:-0.60px;-webkit-text-stroke:0.1px #222;">150</div>
<div class="t" style="left:1270.7px;top:693.5px;font-size:21.86px;line-height:21.86px;color:#222;letter-spacing:-0.60px;-webkit-text-stroke:0.1px #222;">125</div>
<div class="t" style="left:1270.6px;top:728.2px;font-size:21.86px;line-height:21.86px;color:#222;letter-spacing:-0.60px;-webkit-text-stroke:0.1px #222;">100</div>
<div class="t" style="left:1282.2px;top:762.8px;font-size:21.86px;line-height:21.86px;color:#222;letter-spacing:-0.60px;-webkit-text-stroke:0.1px #222;">75</div>
<div class="t" style="left:1282.1px;top:797.5px;font-size:21.86px;line-height:21.86px;color:#222;letter-spacing:-0.60px;-webkit-text-stroke:0.1px #222;">50</div>
<div class="t" style="left:1282.2px;top:832.1px;font-size:21.86px;line-height:21.86px;color:#222;letter-spacing:-0.60px;-webkit-text-stroke:0.1px #222;">25</div>
<div class="t" style="left:1293.6px;top:866.8px;font-size:21.86px;line-height:21.86px;color:#222;letter-spacing:-0.60px;-webkit-text-stroke:0.1px #222;">0</div>
<div class="t" style="left:1270.0px;top:901.5px;font-size:21.86px;line-height:21.86px;color:#222;letter-spacing:-0.60px;-webkit-text-stroke:0.1px #222;">−25</div>
<div class="t" style="left:1269.9px;top:936.1px;font-size:21.86px;line-height:21.86px;color:#222;letter-spacing:-0.60px;-webkit-text-stroke:0.1px #222;">−50</div>
<div class="t" style="left:1270.0px;top:970.8px;font-size:21.86px;line-height:21.86px;color:#222;letter-spacing:-0.60px;-webkit-text-stroke:0.1px #222;">−75</div>
<div class="t" style="left:2734.0px;top:971.1px;font-size:21.86px;line-height:21.86px;color:#222;letter-spacing:-0.60px;-webkit-text-stroke:0.1px #222;">−20</div>
<div class="t" style="left:2734.0px;top:919.2px;font-size:21.86px;line-height:21.86px;color:#222;letter-spacing:-0.60px;-webkit-text-stroke:0.1px #222;">−10</div>
<div class="t" style="left:2734.2px;top:867.3px;font-size:21.86px;line-height:21.86px;color:#222;letter-spacing:-0.60px;-webkit-text-stroke:0.1px #222;">0</div>
<div class="t" style="left:2733.4px;top:815.4px;font-size:21.86px;line-height:21.86px;color:#222;letter-spacing:-0.60px;-webkit-text-stroke:0.1px #222;">10</div>
<div class="t" style="left:2733.9px;top:763.5px;font-size:21.86px;line-height:21.86px;color:#222;letter-spacing:-0.60px;-webkit-text-stroke:0.1px #222;">20</div>
<div class="t" style="left:2734.2px;top:711.7px;font-size:21.86px;line-height:21.86px;color:#222;letter-spacing:-0.60px;-webkit-text-stroke:0.1px #222;">30</div>
<div class="t" style="left:2734.6px;top:659.8px;font-size:21.86px;line-height:21.86px;color:#222;letter-spacing:-0.60px;-webkit-text-stroke:0.1px #222;">40</div>
<div class="t" style="left:2734.1px;top:607.9px;font-size:21.86px;line-height:21.86px;color:#222;letter-spacing:-0.60px;-webkit-text-stroke:0.1px #222;">50</div>
<div class="t" style="left:2733.9px;top:556.0px;font-size:21.86px;line-height:21.86px;color:#222;letter-spacing:-0.60px;-webkit-text-stroke:0.1px #222;">60</div>
<div class="t" style="left:2733.9px;top:504.1px;font-size:21.86px;line-height:21.86px;color:#222;letter-spacing:-0.60px;-webkit-text-stroke:0.1px #222;">70</div>
<div class="t" style="left:2734.1px;top:452.3px;font-size:21.86px;line-height:21.86px;color:#222;letter-spacing:-0.60px;-webkit-text-stroke:0.1px #222;">80</div>
<div class="t" style="left:2734.0px;top:400.4px;font-size:21.86px;line-height:21.86px;color:#222;letter-spacing:-0.60px;-webkit-text-stroke:0.1px #222;">90</div>
<div class="t" style="left:1318.9px;top:999.1px;font-size:21.86px;line-height:21.86px;color:#222;letter-spacing:-0.60px;-webkit-text-stroke:0.1px #222;">0</div>
<div class="t" style="left:1403.6px;top:999.1px;font-size:21.86px;line-height:21.86px;color:#222;letter-spacing:-0.60px;-webkit-text-stroke:0.1px #222;">5</div>
<div class="t" style="left:1482.1px;top:999.1px;font-size:21.86px;line-height:21.86px;color:#222;letter-spacing:-0.60px;-webkit-text-stroke:0.1px #222;">10</div>
<div class="t" style="left:1566.9px;top:999.1px;font-size:21.86px;line-height:21.86px;color:#222;letter-spacing:-0.60px;-webkit-text-stroke:0.1px #222;">15</div>
<div class="t" style="left:1651.8px;top:999.1px;font-size:21.86px;line-height:21.86px;color:#222;letter-spacing:-0.60px;-webkit-text-stroke:0.1px #222;">20</div>
<div class="t" style="left:1736.6px;top:999.1px;font-size:21.86px;line-height:21.86px;color:#222;letter-spacing:-0.60px;-webkit-text-stroke:0.1px #222;">25</div>
<div class="t" style="left:1821.4px;top:999.1px;font-size:21.86px;line-height:21.86px;color:#222;letter-spacing:-0.60px;-webkit-text-stroke:0.1px #222;">30</div>
<div class="t" style="left:1906.1px;top:999.1px;font-size:21.86px;line-height:21.86px;color:#222;letter-spacing:-0.60px;-webkit-text-stroke:0.1px #222;">35</div>
<div class="t" style="left:1990.9px;top:999.1px;font-size:21.86px;line-height:21.86px;color:#222;letter-spacing:-0.60px;-webkit-text-stroke:0.1px #222;">40</div>
<div class="t" style="left:2075.7px;top:999.1px;font-size:21.86px;line-height:21.86px;color:#222;letter-spacing:-0.60px;-webkit-text-stroke:0.1px #222;">45</div>
<div class="t" style="left:2160.1px;top:999.1px;font-size:21.86px;line-height:21.86px;color:#222;letter-spacing:-0.60px;-webkit-text-stroke:0.1px #222;">50</div>
<div class="t" style="left:2244.9px;top:999.1px;font-size:21.86px;line-height:21.86px;color:#222;letter-spacing:-0.60px;-webkit-text-stroke:0.1px #222;">55</div>
<div class="t" style="left:2329.4px;top:999.1px;font-size:21.86px;line-height:21.86px;color:#222;letter-spacing:-0.60px;-webkit-text-stroke:0.1px #222;">60</div>
<div class="t" style="left:2414.2px;top:999.1px;font-size:21.86px;line-height:21.86px;color:#222;letter-spacing:-0.60px;-webkit-text-stroke:0.1px #222;">65</div>
<div class="t" style="left:2498.8px;top:999.1px;font-size:21.86px;line-height:21.86px;color:#222;letter-spacing:-0.60px;-webkit-text-stroke:0.1px #222;">70</div>
<div class="t" style="left:2583.6px;top:999.1px;font-size:21.86px;line-height:21.86px;color:#222;letter-spacing:-0.60px;-webkit-text-stroke:0.1px #222;">75</div>
<div class="t" style="left:2668.3px;top:999.1px;font-size:21.86px;line-height:21.86px;color:#222;letter-spacing:-0.60px;-webkit-text-stroke:0.1px #222;">80</div>
<div class="a" style="left:944px;top:668.5px;width:600px;height:40px;transform:rotate(-90deg);"><div class="t" style="left:89.8px;top:4.4px;font-size:27.86px;line-height:27.86px;color:#111;letter-spacing:1.04px;font-weight:bold;-webkit-text-stroke:0;">Altitude; Vertical acceleration</div>
</div>
<div class="a" style="left:2495px;top:667px;width:600px;height:40px;transform:rotate(90deg);"><div class="t" style="left:185.1px;top:4.4px;font-size:27.86px;line-height:27.86px;color:#111;letter-spacing:1.19px;font-weight:bold;-webkit-text-stroke:0;">Vertical velocity</div>
</div>
<div class="t" style="left:1961.7px;top:1031.2px;font-size:28.14px;line-height:28.14px;color:#111;letter-spacing:0.88px;font-weight:bold;-webkit-text-stroke:0;">Time (s)</div>
<div class="t" style="left:1642.8px;top:1084.8px;font-size:25.00px;line-height:25.00px;color:#111;letter-spacing:0.86px;">Altitude (m)</div>
<div class="t" style="left:1824.4px;top:1084.8px;font-size:25.00px;line-height:25.00px;color:#111;letter-spacing:0.69px;">Vertical acceleration (m/s</div>
<div class="t" style="left:2123.0px;top:1081.9px;font-size:14.29px;line-height:14.29px;color:#111;">2</div>
<div class="t" style="left:2132.2px;top:1084.8px;font-size:25.00px;line-height:25.00px;color:#111;">)</div>
<div class="t" style="left:2184.2px;top:1084.8px;font-size:25.00px;line-height:25.00px;color:#111;letter-spacing:0.83px;">Vertical velocity (m/s)</div>
<div class="a" style="left:1587.7px;top:499.6px;width:156.4px;height:126.2px;background:#fdfcd2;box-shadow:0 0 0 1px #c4c4bc, 0 4px 14px rgba(0,0,0,0.25);"></div>
<div class="t" style="left:1595.5px;top:506.2px;font-size:23.29px;line-height:23.29px;color:#000;letter-spacing:0.42px;font-weight:bold;-webkit-text-stroke:0;font-style:italic;">Altitude (m)</div>
<div class="t" style="left:1594.2px;top:533.9px;font-size:23.29px;line-height:23.29px;color:#000;letter-spacing:0.39px;">Y: 302,88 m</div>
<div class="t" style="left:1594.2px;top:561.6px;font-size:23.29px;line-height:23.29px;color:#000;letter-spacing:-0.07px;">X: 15,58 s</div>
<div class="t" style="left:1593.9px;top:595.6px;font-size:23.29px;line-height:23.29px;color:#000;letter-spacing:0.94px;">313</div>
<div class="t" style="left:1635.8px;top:590.6px;font-size:17.86px;line-height:17.86px;color:#000;">rd</div>
<div class="t" style="left:1662.7px;top:595.6px;font-size:23.29px;line-height:23.29px;color:#000;letter-spacing:0.10px;">sample</div>
<div class="t" style="left:1199.0px;top:1163.1px;font-size:25.00px;line-height:25.00px;color:#000;letter-spacing:-0.28px;">left click drag to zoom area. mouse wheel to zoom. ctrl–mouse wheel to zoom x axis only. ctrl–left click drag to pan.  right click drag to zoom dynamically.</div>
<div class="a" style="left:1213.0px;top:1211.6px;width:30.0px;height:29.4px;background:linear-gradient(#ffffff,#f6f6f6);border-radius:7px;box-shadow:inset 0 0 0 2.5px #7d8fa6;"></div>
<div class="t" style="left:1253.4px;top:1212.1px;font-size:27.86px;line-height:27.86px;color:#000;letter-spacing:0.14px;">Show data points</div>
<div class="a" style="left:1498.0px;top:1206.3px;width:205.7px;height:40.0px;background:#fff;border-radius:10px;box-shadow:0 0.5px 1.5px rgba(0,0,0,0.35);"></div>
<div class="t" style="left:1522.0px;top:1212.9px;font-size:27.86px;line-height:27.86px;color:#000;letter-spacing:1.38px;">All</div>
<div class="a" style="left:1668.0px;top:1210.0px;width:31.8px;height:32.0px;background:linear-gradient(#3d9bff,#0a6cf0);border-radius:7px;"></div>
<svg class="a" style="left:1676px;top:1214px" width="16" height="24" viewBox="0 0 16 24"><path d="M3 9 L8 4 L13 9 M3 15 L8 20 L13 15" fill="none" stroke="#fff" stroke-width="2.4" stroke-linecap="round" stroke-linejoin="round"/></svg>
<div class="a" style="left:1736.0px;top:1208.0px;width:80.0px;height:40.0px;background:#fff;border-radius:10px;box-shadow:0 0.5px 1.5px rgba(0,0,0,0.35);"></div>
<svg class="a" style="left:1760px;top:1210.5px" width="34" height="34" viewBox="0 0 34 34"><defs><linearGradient id="lens{kind}" x1="0" y1="0" x2="0" y2="1"><stop offset="0" stop-color="#fff"/><stop offset="0.5" stop-color="#f2f2f4"/><stop offset="1" stop-color="#cfd0d6"/></linearGradient></defs><circle cx="15" cy="15" r="11" fill="url(#lensin)" stroke="#a4a4a8" stroke-width="2.5"/><path d="M9 15 H21 M15 9 V21" stroke="#1f3fa0" stroke-width="3"/><path d="M23 23 L29 29" stroke="#222" stroke-width="3.5" stroke-linecap="round"/></svg>
<div class="a" style="left:1848.0px;top:1208.0px;width:80.0px;height:40.0px;background:#fff;border-radius:10px;box-shadow:0 0.5px 1.5px rgba(0,0,0,0.35);"></div>
<svg class="a" style="left:1872px;top:1210.5px" width="34" height="34" viewBox="0 0 34 34"><defs><linearGradient id="lens{kind}" x1="0" y1="0" x2="0" y2="1"><stop offset="0" stop-color="#fff"/><stop offset="0.5" stop-color="#f2f2f4"/><stop offset="1" stop-color="#cfd0d6"/></linearGradient></defs><circle cx="15" cy="15" r="11" fill="url(#lensfit)" stroke="#a4a4a8" stroke-width="2.5"/><path d="M11 10 H9 V20 H11 M19 10 H21 V20 H19" stroke="#1f3fa0" stroke-width="2.5" fill="none"/><path d="M23 23 L29 29" stroke="#222" stroke-width="3.5" stroke-linecap="round"/></svg>
<div class="a" style="left:1960.0px;top:1208.0px;width:80.0px;height:40.0px;background:#fff;border-radius:10px;box-shadow:0 0.5px 1.5px rgba(0,0,0,0.35);"></div>
<svg class="a" style="left:1984px;top:1210.5px" width="34" height="34" viewBox="0 0 34 34"><defs><linearGradient id="lens{kind}" x1="0" y1="0" x2="0" y2="1"><stop offset="0" stop-color="#fff"/><stop offset="0.5" stop-color="#f2f2f4"/><stop offset="1" stop-color="#cfd0d6"/></linearGradient></defs><circle cx="15" cy="15" r="11" fill="url(#lensout)" stroke="#a4a4a8" stroke-width="2.5"/><path d="M9 15 H21" stroke="#1f3fa0" stroke-width="3"/><path d="M23 23 L29 29" stroke="#222" stroke-width="3.5" stroke-linecap="round"/></svg>
<div class="a" style="left:2072.0px;top:1206.0px;width:213.5px;height:40.0px;background:#fff;border-radius:10px;box-shadow:0 0.5px 1.5px rgba(0,0,0,0.35);"></div>
<div class="t" style="left:2094.6px;top:1212.4px;font-size:27.86px;line-height:27.86px;color:#000;letter-spacing:0.16px;">Export Image</div>
<div class="a" style="left:2708.0px;top:1206.0px;width:118.0px;height:40.0px;background:#fff;border-radius:10px;box-shadow:0 0.5px 1.5px rgba(0,0,0,0.35);"></div>
<div class="t" style="left:2731.1px;top:1212.4px;font-size:27.86px;line-height:27.86px;color:#000;letter-spacing:0.08px;">Close</div>
</body></html>
